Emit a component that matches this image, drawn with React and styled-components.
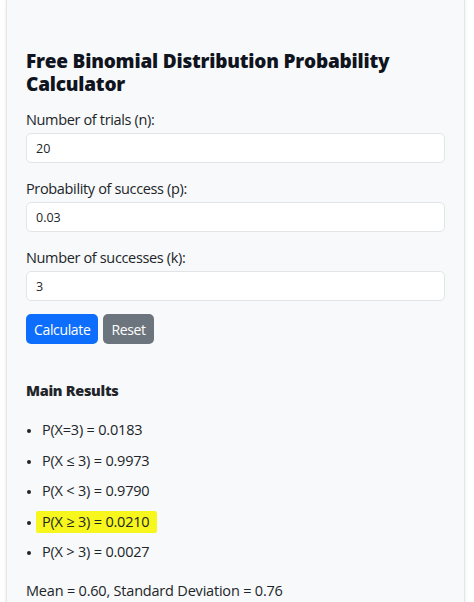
import React, { useState } from 'react';
import styled, { createGlobalStyle } from 'styled-components';

const GlobalStyle = createGlobalStyle`
  html, body {
    margin: 0;
    padding: 0;
    background: #ffffff;
    font-family: "Open Sans", "Noto Sans", sans-serif;
    color: #212529;
  }
`;

const results = [
  { label: 'P(X=3) = 0.0183' },
  { label: 'P(X ≤ 3) = 0.9973' },
  { label: 'P(X < 3) = 0.9790' },
  { label: 'P(X ≥ 3) = 0.0210', marked: true },
  { label: 'P(X > 3) = 0.0027' }
];

const App = () => {
  const [values, setValues] = useState({ n: '20', p: '0.03', k: '3' });

  const handleChange = (e) => {
    setValues({ ...values, [e.target.id]: e.target.value });
  };

  return (
    <>
      <GlobalStyle />
      <Card>
        <Title>Free Binomial Distribution Probability Calculator</Title>

        <Field>
          <Label htmlFor="n">Number of trials (n):</Label>
          <Input id="n" value={values.n} onChange={handleChange} />
        </Field>
        <Field>
          <Label htmlFor="p">Probability of success (p):</Label>
          <Input id="p" value={values.p} onChange={handleChange} />
        </Field>
        <Field>
          <Label htmlFor="k">Number of successes (k):</Label>
          <Input id="k" value={values.k} onChange={handleChange} />
        </Field>

        <ButtonRow>
          <Button type="button" $variant="primary">Calculate</Button>
          <Button type="button" $variant="secondary">Reset</Button>
        </ButtonRow>

        <SubTitle>Main Results</SubTitle>
        <ResultList>
          {results.map((r) => (
            <ResultItem key={r.label}>
              <Marked $on={r.marked}>{r.label}</Marked>
            </ResultItem>
          ))}
        </ResultList>

        <Summary>Mean = 0.60, Standard Deviation = 0.76</Summary>
      </Card>
    </>
  );
};

const Card = styled.div`
  margin-left: 6px;
  width: 459px;
  box-sizing: border-box;
  min-height: 640px;
  padding: 50px 19px 0 19px;
  background: #f8f9fa;
  border: 1px solid #e4e6e8;
  border-top: none;
  box-shadow: 0 0 4px rgba(0, 0, 0, 0.08);
`;

const Title = styled.h1`
  margin: 0 0 14px;
  font-family: "Open Sans", "Noto Sans", sans-serif;
  font-weight: 800;
  font-size: 19px;
  line-height: 23px;
  letter-spacing: -0.2px;
  color: #0f1420;
`;

const Field = styled.div`
  display: flex;
  flex-direction: column;
  margin-bottom: 16px;
`;

const Label = styled.label`
  font-size: 14.5px;
  line-height: 20px;
  letter-spacing: -0.35px;
  margin-bottom: 3px;
`;

const Input = styled.input`
  height: 30px;
  box-sizing: border-box;
  padding: 0 9px;
  border: 1px solid #e2e5e8;
  border-radius: 5px;
  background: #ffffff;
  font-family: "Open Sans", "Noto Sans", sans-serif;
  font-size: 12.5px;
  color: #212529;
  outline: none;
`;

const ButtonRow = styled.div`
  display: flex;
  gap: 5px;
  margin-top: -3px;
`;

const Button = styled.button`
  height: 30px;
  padding: 0 8px;
  border: none;
  border-radius: 5px;
  font-family: "Open Sans", "Noto Sans", sans-serif;
  font-size: 14px;
  letter-spacing: -0.35px;
  color: #ffffff;
  background: ${(p) => (p.$variant === 'primary' ? '#0d6efd' : '#6c757d')};
  cursor: pointer;
`;

const SubTitle = styled.h2`
  margin: 37px 0 0;
  font-family: "Open Sans", "Noto Sans", sans-serif;
  font-weight: 800;
  font-size: 14.5px;
  line-height: 20px;
  letter-spacing: -0.3px;
`;

const ResultList = styled.ul`
  margin: 19px 0 0;
  padding-left: 16px;
`;

const ResultItem = styled.li`
  font-size: 14.5px;
  line-height: 20px;
  letter-spacing: -0.2px;
  margin-bottom: 10.5px;
  &::marker {
    font-size: 12px;
  }
`;

const Marked = styled.span`
  background: ${(p) => (p.$on ? '#f7f71e' : 'transparent')};
  padding: ${(p) => (p.$on ? '1px 8px 2px 6px' : '0')};
  margin-left: ${(p) => (p.$on ? '-6px' : '0')};
  border-radius: 2px;
`;

const Summary = styled.p`
  margin: 19px 0 0;
  font-size: 14.5px;
  line-height: 20px;
  letter-spacing: -0.2px;
`;

export default App;
